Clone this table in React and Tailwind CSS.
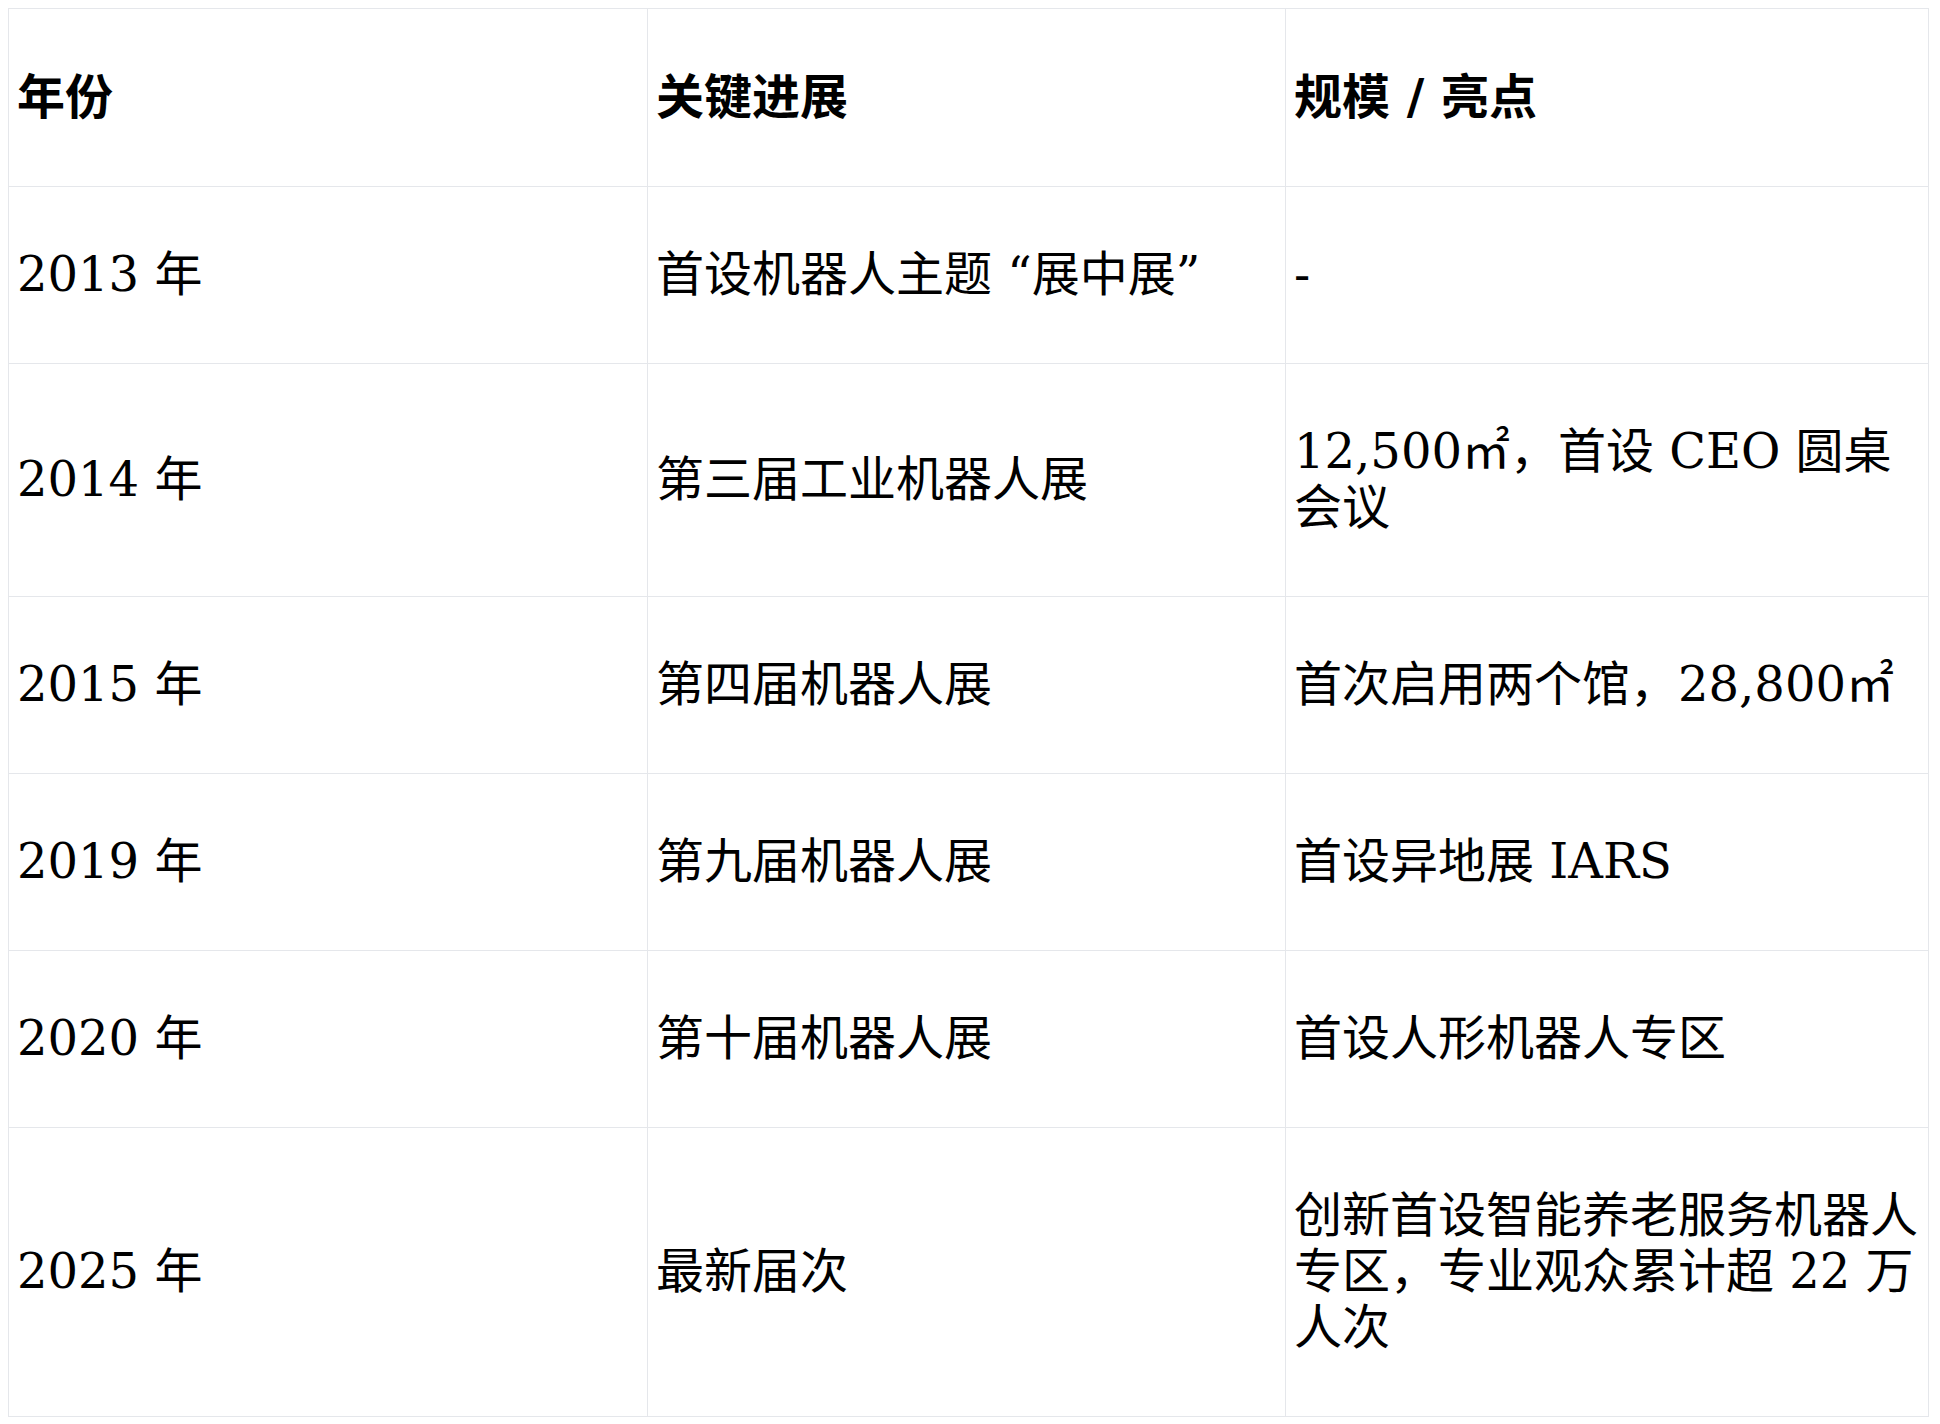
const rows = [
  ['2013 年', '首设机器人主题 “展中展”', '-'],
  ['2014 年', '第三届工业机器人展', '12,500㎡，首设 CEO 圆桌会议'],
  ['2015 年', '第四届机器人展', '首次启用两个馆，28,800㎡'],
  ['2019 年', '第九届机器人展', '首设异地展 IARS'],
  ['2020 年', '第十届机器人展', '首设人形机器人专区'],
  ['2025 年', '最新届次', '创新首设智能养老服务机器人专区，专业观众累计超 22 万人次'],
]

export default function App() {
  return (
    <div className="p-2 bg-white text-black font-['DejaVu_Serif','Noto_Sans_CJK_SC',serif] text-[48px] leading-[1.16]">
      <table className="w-[1921px] table-fixed border-collapse">
        <colgroup>
          <col className="w-[639px]" />
          <col className="w-[638px]" />
          <col />
        </colgroup>
        <thead>
          <tr>
            {['年份', '关键进展', '规模 / 亮点'].map((h) => (
              <th key={h} className="border border-[#e5e7eb] px-2 py-[60.5px] text-left align-middle font-bold">
                {h}
              </th>
            ))}
          </tr>
        </thead>
        <tbody>
          {rows.map((r) => (
            <tr key={r[0]}>
              {r.map((c, i) => (
                <td key={i} className="border border-[#e5e7eb] px-2 py-[60.25px] align-middle">
                  {c}
                </td>
              ))}
            </tr>
          ))}
        </tbody>
      </table>
    </div>
  )
}
